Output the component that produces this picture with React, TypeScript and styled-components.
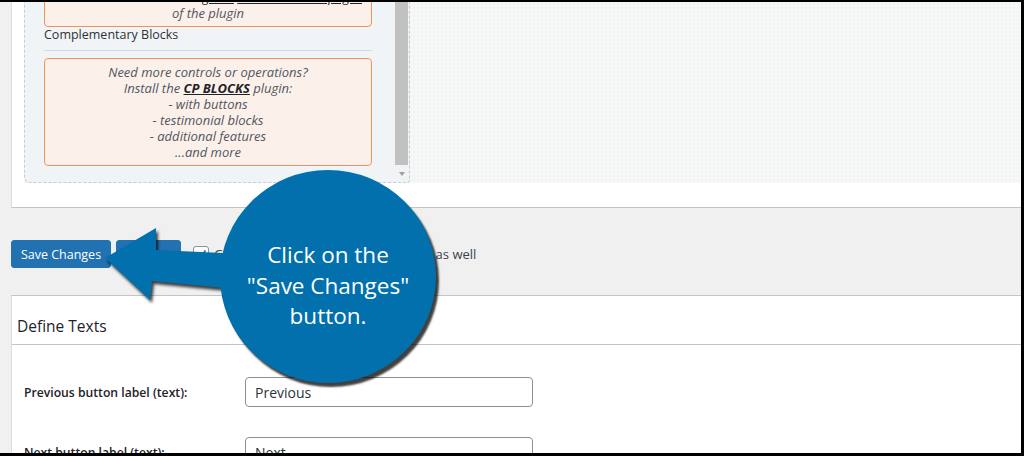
import * as React from 'react';
import styled, { createGlobalStyle } from 'styled-components';

const GlobalStyle = createGlobalStyle`
  body {
    margin: 0;
    background: #000;
    font-family: "Open Sans", "Noto Sans", sans-serif;
  }
`;

const Frame = styled.div`
  position: relative;
  width: 1024px;
  height: 456px;
  box-sizing: border-box;
  border-top: 2px solid #000;
  border-right: 3px solid #000;
  border-bottom: 3px solid #000;
  background: #f0f0f1;
  overflow: hidden;
  display: flex;
  flex-direction: column;
`;

const TopPanel = styled.div`
  flex-shrink: 0;
  margin-left: 11px;
  background: #fff;
  border-left: 1px solid #dcdcde;
  border-bottom: 1px solid #c3c4c7;
  padding: 0 0 24px 12px;
`;

const EditorArea = styled.div`
  display: flex;
  height: 181px;
  background-color: #f6f7f7;
  background-image: radial-gradient(rgba(0, 0, 0, 0.02) 1px, transparent 1px);
  background-size: 4px 4px;
`;

const SidePanel = styled.div`
  display: flex;
  width: 386px;
  box-sizing: border-box;
  padding-left: 19px;
  background: #f1f4f7;
  border: 1px dashed #c9cdd1;
  border-top: none;
  border-bottom-left-radius: 6px;
  border-bottom-right-radius: 3px;
  overflow: hidden;
`;

const PanelContent = styled.div`
  width: 328px;
  flex-shrink: 0;
  margin-top: -19px;
`;

const Notice = styled.div`
  border: 1px solid #f2925a;
  border-radius: 4px;
  background: #fcf0eb;
  padding: 5px 0;
  text-align: center;
  font-size: 13px;
  line-height: 16px;
  font-style: italic;
  color: #50575e;
  white-space: nowrap;
`;

const NoticeLink = styled.a`
  color: #1d2327;
  text-decoration: underline;
`;

const StrongLink = styled.a`
  color: #1d2327;
  font-weight: 700;
  text-decoration: underline;
`;

const SectionLabel = styled.div`
  font-size: 12.5px;
  line-height: 16px;
  color: #2c3338;
  padding-bottom: 7px;
  border-bottom: 1px solid #d5d9de;
  margin-bottom: 7px;
`;

const Scrollbar = styled.div`
  display: flex;
  flex-direction: column;
  width: 13px;
  margin-left: 23px;
  flex-shrink: 0;
`;

const ScrollThumb = styled.div`
  flex: 1;
  background: #c1c1c1;
`;

const ScrollArrow = styled.div`
  height: 17px;
  display: flex;
  align-items: center;
  justify-content: center;
  &::after {
    content: '';
    border-left: 3px solid transparent;
    border-right: 3px solid transparent;
    border-top: 4px solid #a0a0a0;
  }
`;

const ActionBar = styled.div`
  flex-shrink: 0;
  height: 87px;
  box-sizing: border-box;
  padding: 32px 0 0 11px;
  display: flex;
  align-items: flex-start;
`;

const Button = styled.button<{ $w: number }>`
  width: ${(p) => p.$w}px;
  height: 28px;
  margin-right: 5px;
  padding: 0;
  background: #2271b1;
  border: 1px solid #2271b1;
  border-radius: 3px;
  color: #fff;
  font-family: "Open Sans", sans-serif;
  font-size: 12.5px;
`;

const CheckRow = styled.label`
  display: flex;
  align-items: center;
  height: 28px;
  margin-left: 7px;
  font-size: 13px;
  color: #3c434a;
`;

const CheckBox = styled.span`
  width: 14px;
  height: 14px;
  border: 1px solid #8c8f94;
  border-radius: 3px;
  background: #fff;
  margin-right: 5px;
  display: flex;
  align-items: center;
  justify-content: center;
`;

const DefinePanel = styled.div`
  flex: 1;
  margin-left: 11px;
  background: #fff;
  border-top: 1px solid #c3c4c7;
  border-left: 1px solid #dcdcde;
`;

const PanelHeading = styled.h2`
  margin: 0;
  height: 49px;
  box-sizing: border-box;
  display: flex;
  align-items: flex-end;
  padding: 0 0 8px 5px;
  border-bottom: 1px solid #c3c4c7;
  font-size: 15.5px;
  line-height: 20px;
  font-weight: 500;
  color: #1d2327;
`;

const FieldTable = styled.div`
  padding-top: 17px;
`;

const FieldRow = styled.div`
  display: flex;
  align-items: center;
  height: 60px;
`;

const FieldLabel = styled.div`
  width: 233px;
  box-sizing: border-box;
  padding-left: 12px;
  font-size: 12.2px;
  font-weight: 600;
  color: #1d2327;
`;

const TextInput = styled.input`
  width: 288px;
  height: 30px;
  box-sizing: border-box;
  padding: 0 9px;
  border: 1px solid #8c8f94;
  border-radius: 4px;
  font-family: "Open Sans", sans-serif;
  font-size: 14px;
  color: #2c3338;
  background: #fff;
`;

const ArrowSvg = styled.svg`
  position: absolute;
  left: 100px;
  top: 220px;
  width: 150px;
  height: 90px;
  filter: drop-shadow(2px 3px 1.5px rgba(0, 0, 0, 0.75));
`;

const Bubble = styled.div`
  position: absolute;
  left: 220px;
  top: 168px;
  width: 216px;
  height: 213px;
  box-sizing: border-box;
  padding-top: 70px;
  border-radius: 50%;
  background: #0270ac;
  box-shadow: 3px 4px 2px rgba(0, 0, 0, 0.75);
  color: #fff;
  text-align: center;
  font-family: "Open Sans", sans-serif;
  font-size: 22.5px;
  line-height: 30.5px;
`;

const fields = [
  { label: 'Previous button label (text):', value: 'Previous' },
  { label: 'Next button label (text):', value: 'Next' },
];

export default function App() {
  return (
    <>
      <GlobalStyle />
      <Frame>
        <TopPanel>
          <EditorArea>
            <SidePanel>
              <PanelContent>
                <Notice>
                  For more details read the <NoticeLink>guide</NoticeLink> <NoticeLink>documentation pages</NoticeLink>
                  <br />
                  of the plugin
                </Notice>
                <SectionLabel>Complementary Blocks</SectionLabel>
                <Notice>
                  Need more controls or operations?
                  <br />
                  Install the <StrongLink>CP BLOCKS</StrongLink> plugin:
                  <br />- with buttons
                  <br />- testimonial blocks
                  <br />- additional features
                  <br />
                  ...and more
                </Notice>
              </PanelContent>
              <Scrollbar>
                <ScrollThumb />
                <ScrollArrow />
              </Scrollbar>
            </SidePanel>
          </EditorArea>
        </TopPanel>

        <ActionBar>
          <Button $w={100}>Save Changes</Button>
          <Button $w={65}>Preview</Button>
          <CheckRow>
            <CheckBox>
              <svg width="12" height="12" viewBox="0 0 12 12">
                <path d="M2 6.5 L5 9.5 L10.5 2.5" fill="none" stroke="#2271b1" strokeWidth="1.8" />
              </svg>
            </CheckBox>
            Generate a page with the form code as well
          </CheckRow>
        </ActionBar>

        <DefinePanel>
          <PanelHeading>Define Texts</PanelHeading>
          <FieldTable>
            {fields.map((f) => (
              <FieldRow key={f.label}>
                <FieldLabel>{f.label}</FieldLabel>
                <TextInput readOnly value={f.value} />
              </FieldRow>
            ))}
          </FieldTable>
        </DefinePanel>

        <ArrowSvg viewBox="0 0 150 90">
          <polygon points="5,36 56,6 56,28 145,32 145,68 52,59 50,78" fill="#0270ac" />
        </ArrowSvg>
        <Bubble>
          Click on the
          <br />
          "Save Changes"
          <br />
          button.
        </Bubble>
      </Frame>
    </>
  );
}
